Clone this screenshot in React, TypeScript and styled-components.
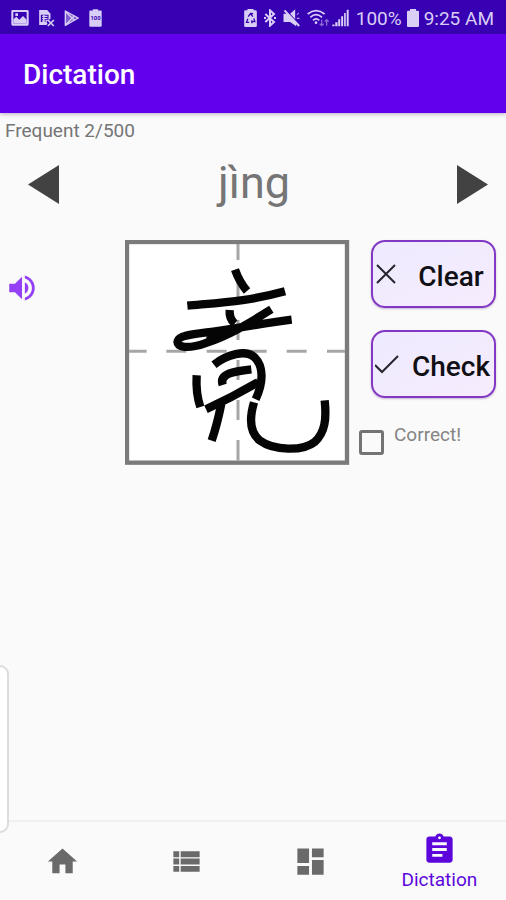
import React from "react";
import styled, { createGlobalStyle } from "styled-components";
import {
  MdAssignment,
  MdDashboard,
  MdHome,
  MdViewList,
  MdVolumeUp,
} from "react-icons/md";

const GlobalStyle = createGlobalStyle`
  *, *::before, *::after { box-sizing: border-box; }
  body {
    margin: 0;
    background: #fafafa;
    font-family: Roboto, "Liberation Sans", sans-serif;
    color: #757575;
  }
  button, input { font: inherit; color: inherit; }
`;

const Page = styled.div`
  min-height: 100vh;
  display: flex;
  flex-direction: column;
  overflow-x: hidden;
`;

const StatusBar = styled.div`
  height: 34px;
  flex: none;
  display: flex;
  align-items: center;
  justify-content: space-between;
  padding: 2px 12px 0 11px;
  background: #3700b3;
  color: #d9cef5;
  font-size: 19px;
  white-space: nowrap;
`;

const StatusGroup = styled.div<{ $gap: number }>`
  display: flex;
  align-items: center;
  gap: ${(p) => p.$gap}px;
`;

const StatusGlyph = styled.svg<{ $width: number }>`
  width: ${(p) => p.$width}px;
  height: 18px;
  flex: none;
  display: block;
`;

const AppBar = styled.header`
  height: 79px;
  flex: none;
  display: flex;
  align-items: center;
  padding: 2px 23px 0;
  background: #6200ee;
  box-shadow: 0 1px 4px rgba(60, 20, 110, 0.35);
`;

const Title = styled.h1`
  margin: 0;
  color: #fff;
  font-size: 28px;
  line-height: 32px;
  font-weight: 500;
`;

const Main = styled.main`
  flex: 1;
  display: flex;
  flex-direction: column;
`;

const Progress = styled.p`
  margin: 0;
  padding: 6px 5px 0;
  font-size: 19px;
  line-height: 24px;
`;

const WordRow = styled.div`
  display: grid;
  grid-template-columns: 1fr auto 1fr;
  align-items: center;
  padding: 0 18px 0 20px;
  height: 82px;
`;

const StepButton = styled.button<{ $end?: boolean }>`
  justify-self: ${(p) => (p.$end ? "end" : "start")};
  padding: 0 0 0 8px;
  border: 0;
  background: none;
  color: #424242;
  cursor: pointer;
  svg { display: block; width: 31px; height: 39px; }
`;

const Pinyin = styled.h2`
  margin: 0;
  font-size: 45px;
  line-height: 52px;
  padding-bottom: 2px;
  font-weight: 400;
`;

const Practice = styled.section`
  display: grid;
  grid-template-columns: 1fr 225px 156px;
  align-items: start;
  padding-top: 15px;
`;

const SoundButton = styled.button`
  justify-self: start;
  margin-top: 31px;
  padding: 0 5px;
  border: 0;
  background: none;
  color: #9440f5;
  cursor: pointer;
  svg { display: block; width: 34px; height: 34px; }
`;

const WritingPad = styled.svg`
  display: block;
  width: 100%;
  height: auto;
`;

const Actions = styled.div`
  display: flex;
  flex-direction: column;
  gap: 22px;
  padding: 0 10px 0 9px;
`;

const ActionButton = styled.button`
  height: 68px;
  margin-left: 12px;
  padding: 2px 0 0 2px;
  display: flex;
  align-items: center;
  gap: 9px;
  border: 2px solid #8338c4;
  border-radius: 14px;
  background: linear-gradient(155deg, #eeeaff, #f6ecfd);
  box-shadow: 0 1px 2px rgba(70, 30, 120, 0.3);
  color: #101014;
  font-size: 28px;
  font-weight: 500;
  cursor: pointer;
  svg { flex: none; width: 24px; height: 24px; }
  span { flex: 1; text-align: center; padding-top: 2px; }
`;

const ResultLabel = styled.label`
  display: flex;
  align-items: flex-start;
  gap: 10px;
  padding-top: 3px;
  font-size: 19px;
  line-height: 24px;
  color: #848484;
`;

const ResultBox = styled.input`
  appearance: none;
  flex: none;
  width: 25px;
  height: 25px;
  margin: 7px 0 0;
  border: 3px solid #747474;
  border-radius: 3px;
  &:checked { background: #6200ee; }
`;

const BottomNav = styled.nav`
  position: relative;
  flex: none;
  height: 80px;
  display: flex;
  border-top: 2px solid #f0f0f0;
`;

const NavLink = styled.a<{ $active?: boolean }>`
  flex: ${(p) => (p.$active ? "133 1 0" : "124 1 0")};
  display: flex;
  flex-direction: column;
  align-items: center;
  justify-content: center;
  gap: 1px;
  padding-top: ${(p) => (p.$active ? 2 : 1)}px;
  color: ${(p) => (p.$active ? "#5c06dc" : "#6a6a6a")};
  font-size: 19px;
  line-height: 24px;
  text-decoration: none;
  svg { display: block; width: 35px; height: 35px; }
`;

const EdgeHandle = styled.div`
  position: absolute;
  left: 0;
  bottom: 67px;
  width: 9px;
  height: 168px;
  border: 2px solid #dcdcdc;
  border-left: 0;
  border-radius: 0 9px 9px 0;
  background: #fff;
`;

const ImageGlyph = () => (
  <StatusGlyph viewBox="0 0 54 54" $width={18} aria-hidden="true">
    <path
      fillRule="evenodd"
      fill="currentColor"
      d="M5 3h44q4 0 4 4v39q0 4-4 4H5q-4 0-4-4V7q0-4 4-4zM7 9v34h40V9z"
    />
    <path fill="currentColor" d="M7 42V31l9-8 9 9 11-11 11 11v11zM13 13h8v8h-8z" />
  </StatusGlyph>
);

const SheetGlyph = () => (
  <StatusGlyph viewBox="0 0 50 54" $width={17} aria-hidden="true">
    <path
      fillRule="evenodd"
      fill="currentColor"
      d="M3 3h24l10 11v15l-7 5-5 4 3 6-3 4H3zM8 17v22h14v-6h9V17z"
    />
    <path stroke="currentColor" strokeWidth="4" d="M12 22h16M12 29h16M12 36h8M17 18v21" />
    <path stroke="currentColor" strokeWidth="5" fill="none" d="M29 33l18 18M47 33L29 51" />
  </StatusGlyph>
);

const PlayStoreGlyph = () => (
  <StatusGlyph viewBox="0 0 48 54" $width={16} aria-hidden="true">
    <path
      fill="currentColor"
      fillOpacity="0.45"
      stroke="currentColor"
      strokeWidth="4"
      strokeLinejoin="round"
      d="M4 6l39 21L4 49z"
    />
    <path fill="none" stroke="currentColor" strokeWidth="4" d="M5 8l26 26M5 47l26-26" />
  </StatusGlyph>
);

const FullBatteryGlyph = () => (
  <StatusGlyph viewBox="0 0 40 54" $width={13} aria-hidden="true">
    <path fill="currentColor" d="M12 0h16v4h8q3 0 3 3v44q0 3-3 3H4q-3 0-3-3V7q0-3 3-3h8z" />
    <text x="20" y="34" textAnchor="middle" fontSize="18" fontWeight="700" fill="#3700b3">
      100
    </text>
  </StatusGlyph>
);

const RecycleBatteryGlyph = () => (
  <StatusGlyph viewBox="0 0 38 54" $width={13} aria-hidden="true">
    <path fill="currentColor" d="M10 0h18v4h6q4 0 4 4v42q0 4-4 4H4q-4 0-4-4V8q0-4 4-4h6z" />
    <path
      fill="none"
      stroke="#3700b3"
      strokeWidth="4"
      d="M12 23l7-9 7 9M29 28l3 10h-8M15 40H7l4-11M20 13l7 1M23 34v9"
    />
  </StatusGlyph>
);

const BluetoothGlyph = () => (
  <StatusGlyph viewBox="0 0 36 54" $width={12} aria-hidden="true">
    <path
      fill="none"
      stroke="currentColor"
      strokeWidth="6"
      d="M4 15l26 24-12 11V4l12 11L4 39M0 27h6M30 27h6"
    />
  </StatusGlyph>
);

const MutedGlyph = () => (
  <StatusGlyph viewBox="0 0 50 54" $width={17} aria-hidden="true">
    <path fill="currentColor" d="M1 14h12l26 29v9L21 39H1zM21 14L36 1v30z" />
    <path fill="none" stroke="currentColor" strokeWidth="6" d="M4 4l44 47" />
    <path fill="none" stroke="currentColor" strokeWidth="3" d="M41 17l6-5M41 28h8" />
  </StatusGlyph>
);

const WifiGlyph = () => (
  <StatusGlyph viewBox="0 0 66 54" $width={22} aria-hidden="true">
    <g fill="none" stroke="currentColor" strokeWidth="5">
      <path d="M2 15Q27-5 53 15" />
      <path d="M10 25Q27 9 45 25" />
      <path d="M18 34Q27 25 37 34" />
    </g>
    <circle cx="27" cy="41" r="4" fill="currentColor" />
    <path
      fill="none"
      stroke="currentColor"
      strokeOpacity="0.5"
      strokeWidth="4"
      d="M44 32v18M38 44l6 6 6-6M59 50V32M53 38l6-6 6 6"
    />
  </StatusGlyph>
);

const SignalGlyph = () => (
  <StatusGlyph viewBox="0 0 52 54" $width={17} aria-hidden="true">
    <path
      fill="currentColor"
      d="M1 47h7v5H1zM10 40h7v12h-7zM19 31h6v21h-6zM28 22h6v30h-6zM37 12h5v40h-5zM45 2h6v50h-6z"
    />
  </StatusGlyph>
);

const BatteryGlyph = () => (
  <StatusGlyph viewBox="0 0 36 54" $width={12} aria-hidden="true">
    <path fill="currentColor" d="M9 0h18v5h6q3 0 3 3v43q0 3-3 3H3q-3 0-3-3V8q0-3 3-3h6z" />
  </StatusGlyph>
);

const strokes = [
  "M375 119Q388 156 411 183",
  "M232 227C340 217 420 213 525 184",
  "M359 240Q357 266 374 281",
  "M484 238C420 278 355 318 285 340C236 357 198 353 203 333C207 315 255 312 315 304C400 292 470 278 545 269",
  "M312 404C350 374 407 357 434 382C462 410 460 458 437 508",
  "M338 465C327 431 370 424 424 418",
  "M260 436Q257 490 271 531",
  "M288 538Q370 500 445 456",
  "M334 521Q322 582 305 632",
  "M432 517C416 571 423 611 450 632C491 662 578 665 615 635C645 607 650 567 644 511",
];

const HandwritingPad = () => (
  <WritingPad viewBox="45 30 675 675" role="img" aria-label="Handwritten character">
    <rect x="51" y="36" width="660" height="662" fill="#fff" stroke="#7b7b7b" strokeWidth="13" />
    <path
      fill="none"
      stroke="#a6a6a6"
      strokeWidth="9"
      d="M384 42v48M384 150v60M384 270v60M384 390v60M384 510v60M384 630v62M57 364h53M169 364h60M290 364h60M410 364h60M530 364h60M651 364h54"
    />
    <g fill="none" stroke="#050505" strokeWidth="25" strokeLinejoin="round">
      {strokes.map((d) => (
        <path key={d} d={d} />
      ))}
      <path d="M290 326C320 316 345 302 372 294C345 316 320 324 290 326" strokeWidth="12" />
    </g>
  </WritingPad>
);

const navItems = [
  { name: "Home", Icon: MdHome },
  { name: "List", Icon: MdViewList },
  { name: "Dashboard", Icon: MdDashboard },
];

export default function App() {
  return (
    <>
      <GlobalStyle />
      <Page>
        <StatusBar>
          <StatusGroup $gap={9}>
            <ImageGlyph />
            <SheetGlyph />
            <PlayStoreGlyph />
            <FullBatteryGlyph />
          </StatusGroup>
          <StatusGroup $gap={7}>
            <RecycleBatteryGlyph />
            <BluetoothGlyph />
            <MutedGlyph />
            <StatusGroup $gap={3}>
              <WifiGlyph />
              <SignalGlyph />
            </StatusGroup>
            <StatusGroup $gap={5}>
              <span>100%</span>
              <BatteryGlyph />
              <span>9:25 AM</span>
            </StatusGroup>
          </StatusGroup>
        </StatusBar>
        <AppBar>
          <Title>Dictation</Title>
        </AppBar>
        <Main>
          <Progress>Frequent 2/500</Progress>
          <WordRow>
            <StepButton type="button" aria-label="Previous word">
              <svg viewBox="0 0 31 39">
                <path d="M0 19.5L31 0v39z" fill="currentColor" />
              </svg>
            </StepButton>
            <Pinyin>jìng</Pinyin>
            <StepButton type="button" aria-label="Next word" $end>
              <svg viewBox="0 0 31 39">
                <path d="M31 19.5L0 0v39z" fill="currentColor" />
              </svg>
            </StepButton>
          </WordRow>
          <Practice>
            <SoundButton type="button" aria-label="Play sound">
              <MdVolumeUp />
            </SoundButton>
            <HandwritingPad />
            <Actions>
              <ActionButton type="button">
                <svg viewBox="0 0 24 24" fill="none" stroke="#26262e" strokeWidth="2">
                  <path d="M2 2l18 18M20 2L2 20" />
                </svg>
                <span>Clear</span>
              </ActionButton>
              <ActionButton type="button">
                <svg viewBox="0 0 24 24" fill="none" stroke="#26262e" strokeWidth="2">
                  <path d="M0 12l7 7L23 3" />
                </svg>
                <span>Check</span>
              </ActionButton>
              <ResultLabel>
                <ResultBox type="checkbox" />
                Correct!
              </ResultLabel>
            </Actions>
          </Practice>
        </Main>
        <BottomNav>
          {navItems.map(({ name, Icon }) => (
            <NavLink key={name} href="#" aria-label={name}>
              <Icon />
            </NavLink>
          ))}
          <NavLink href="#" $active aria-current="page">
            <MdAssignment />
            Dictation
          </NavLink>
          <EdgeHandle />
        </BottomNav>
      </Page>
    </>
  );
}
